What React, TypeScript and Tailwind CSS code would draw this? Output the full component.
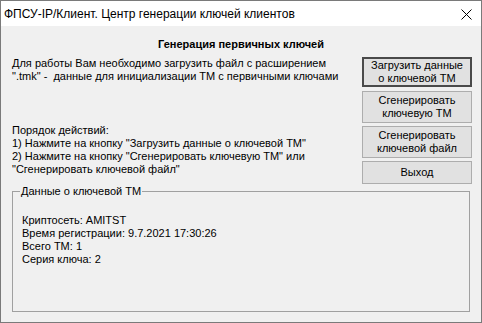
export default function App() {
  const font = { fontFamily: '"Liberation Sans", Arial, sans-serif' }
  return (
    <div
      className="flex h-[323px] w-[482px] flex-col border border-[#7a7a7a] text-[11px] leading-[13px] text-black"
      style={font}
    >
      {/* Title bar */}
      <div className="flex h-[25px] shrink-0 items-center justify-between bg-white pl-[3px] pr-[9px]">
        <span className="text-[12px] leading-[16px]">ФПСУ-IP/Клиент. Центр генерации ключей клиентов</span>
        <svg width="11" height="11" viewBox="0 0 11 11" className="mt-[1px]">
          <path d="M0.5 0.5 L10.5 10.5 M10.5 0.5 L0.5 10.5" stroke="#000" strokeWidth="1" />
        </svg>
      </div>

      {/* Body */}
      <div className="flex flex-1 flex-col bg-[#f0f0f0]">
        <div className="mt-[12px] text-center font-bold">Генерация первичных ключей</div>

        <div className="mt-[6px] flex">
          <div className="flex-1 pl-[11px]">
            <p>
              Для работы Вам необходимо загрузить файл с расширением
              <br />
              ".tmk" -&nbsp; данные для инициализации ТМ с первичными ключами
            </p>
            <p className="mt-[41px]">
              Порядок действий:
              <br />
              1) Нажмите на кнопку "Загрузить данные о ключевой ТМ"
              <br />
              2) Нажмите на кнопку "Сгенерировать ключевую ТМ" или
              <br />
              "Сгенерировать ключевой файл"
            </p>
          </div>

          <div className="mr-[9px] flex w-[110px] flex-col gap-[3px]">
            <button className="mb-[1px] h-[30px] border-2 border-[#4a4a4a] bg-[#e1e1e1] leading-[13px]">
              Загрузить данные
              <br />о ключевой ТМ
            </button>
            <button className="h-[32px] border border-[#adadad] bg-[#e1e1e1] leading-[13px]">
              Сгенерировать
              <br />
              ключевую ТМ
            </button>
            <button className="h-[32px] border border-[#adadad] bg-[#e1e1e1] leading-[13px]">
              Сгенерировать
              <br />
              ключевой файл
            </button>
            <button className="h-[23px] border border-[#adadad] bg-[#e1e1e1] leading-[13px]">Выход</button>
          </div>
        </div>

        <fieldset className="mx-[11px] mt-[1px] h-[127px] border border-[#a0a0a0] px-[9px] pt-0">
          <legend className="ml-[-2px] px-[1px]">Данные о ключевой ТМ</legend>
          <p className="mt-[16px]">
            Криптосеть: AMITST
            <br />
            Время регистрации: 9.7.2021 17:30:26
            <br />
            Всего ТМ: 1
            <br />
            Серия ключа: 2
          </p>
        </fieldset>
      </div>
    </div>
  )
}
